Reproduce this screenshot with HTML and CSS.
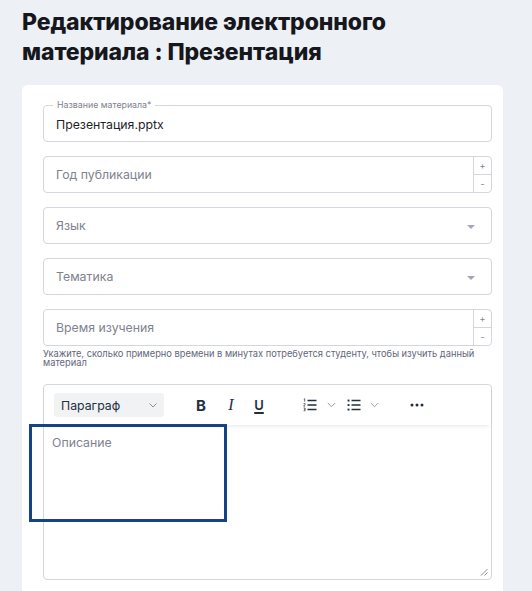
FILE: index.html
```html
<!DOCTYPE html>
<html lang="ru">
<head>
<meta charset="utf-8">
<link rel="stylesheet" href="styles.css">
</head>
<body>
<h1 class="title">Редактирование электронного материала : Презентация</h1>
<div class="card">
  <div class="field outlined">
    <span class="legend">Название материала*</span>
    <span class="value">Презентация.pptx</span>
  </div>
  <div class="field number">
    <span class="placeholder">Год публикации</span>
    <div class="spin"><span>+</span><span>-</span></div>
  </div>
  <div class="field select">
    <span class="placeholder">Язык</span>
    <span class="caret"></span>
  </div>
  <div class="field select">
    <span class="placeholder">Тематика</span>
    <span class="caret"></span>
  </div>
  <div class="group">
    <div class="field number">
      <span class="placeholder">Время изучения</span>
      <div class="spin"><span>+</span><span>-</span></div>
    </div>
    <p class="hint">Укажите, сколько примерно времени в минутах потребуется студенту, чтобы изучить данный материал</p>
  </div>
  <div class="editor">
    <div class="toolbar">
      <div class="block-select">
        <span>Параграф</span>
        <svg width="8" height="5" viewBox="0 0 8 5"><path d="M0.5 0.5l3.5 3.5 3.5-3.5" fill="none" stroke="#7d818c" stroke-width="0.9"/></svg>
      </div>
      <span class="tb bold">B</span>
      <span class="tb italic">I</span>
      <span class="tb under">U</span>
      <span class="tb ol">
        <svg width="14" height="14" viewBox="0 0 14 14"><path d="M4.5 2.5h9M4.5 7h9M4.5 11.5h9" stroke="#222f3e" stroke-width="1.5"/><path d="M0.8 1.2l.9-.5v3M0.6 5.6h1.5v.9L.6 8.1h1.6M0.6 10h1.5v1.3H1.1M2.1 11.3v1.5H0.6" fill="none" stroke="#222f3e" stroke-width=".7"/></svg>
      </span>
      <svg class="chev c1" width="9" height="6" viewBox="0 0 9 6"><path d="M0.8 1l3.7 3.7L8.2 1" fill="none" stroke="#8a8f99" stroke-width="0.9"/></svg>
      <span class="tb ul">
        <svg width="14" height="14" viewBox="0 0 14 14"><path d="M4.5 2.5h9M4.5 7h9M4.5 11.5h9" stroke="#222f3e" stroke-width="1.5"/><rect x="0.6" y="1.6" width="1.9" height="1.9" fill="#222f3e"/><rect x="0.6" y="6.1" width="1.9" height="1.9" fill="#222f3e"/><rect x="0.6" y="10.6" width="1.9" height="1.9" fill="#222f3e"/></svg>
      </span>
      <svg class="chev c2" width="9" height="6" viewBox="0 0 9 6"><path d="M0.8 1l3.7 3.7L8.2 1" fill="none" stroke="#8a8f99" stroke-width="0.9"/></svg>
      <span class="tb more">
        <svg width="14" height="4" viewBox="0 0 14 4"><circle cx="2" cy="2" r="1.5" fill="#222f3e"/><circle cx="7" cy="2" r="1.5" fill="#222f3e"/><circle cx="12" cy="2" r="1.5" fill="#222f3e"/></svg>
      </span>
    </div>
    <div class="content">
      <span class="placeholder">Описание</span>
      <div class="focus-box"></div>
      <svg class="resize" width="8" height="8" viewBox="0 0 8 8"><path d="M7.5 1L1 7.5M7.5 4.5L4.5 7.5" stroke="#7d818c" stroke-width="0.9"/></svg>
    </div>
  </div>
</div>
</body>
</html>
```

FILE: styles.css
```css
* { box-sizing: border-box; }
html, body { margin: 0; padding: 0; }
body {
  background: #edf1f5;
  font-family: Inter, "Noto Sans", sans-serif;
  color: #1e1f26;
  width: 532px;
  height: 591px;
  overflow: hidden;
}
.title {
  margin: 0;
  padding: 7px 0 0 22px;
  width: 440px;
  font-size: 23px;
  line-height: 30px;
  font-weight: 800;
  letter-spacing: -0.1px;
  color: #16171d;
}
.card {
  margin: 18px 29px 0 22px;
  background: #fff;
  border-radius: 6px;
  padding: 20px 11px 20px 21px;
  display: flex;
  flex-direction: column;
  gap: 14px;
}
.field {
  position: relative;
  height: 37px;
  border: 1px solid #d3d6dc;
  border-radius: 4px;
  display: flex;
  align-items: center;
  padding-left: 12px;
  font-size: 12.3px;
}
.placeholder { color: #80828f; }
.value { color: #1e1f26; }
.legend {
  position: absolute;
  top: -6px;
  left: 9px;
  padding: 0 4px;
  background: #fff;
  font-size: 8.8px;
  line-height: 10px;
  color: #80828f;
}
.field.outlined { padding-top: 1px; }
.spin {
  margin-left: auto;
  width: 18px;
  align-self: stretch;
  border-left: 1px solid #d3d6dc;
  display: flex;
  flex-direction: column;
}
.spin span {
  flex: 1;
  display: flex;
  align-items: center;
  justify-content: center;
  font-size: 9px;
  color: #80828f;
}
.spin span + span { border-top: 1px solid #d3d6dc; }
.caret {
  margin-left: auto;
  margin-right: 16px;
  width: 0;
  height: 0;
  border-left: 4px solid transparent;
  border-right: 4px solid transparent;
  border-top: 4px solid #a3a6b7;
  margin-top: 2px;
}
.group { display: flex; flex-direction: column; gap: 3px; }
.hint {
  margin: 0;
  font-size: 9.3px;
  line-height: 9px;
  color: #62667a;
}
.editor {
  margin-top: 3px;
  height: 196px;
  border: 1px solid #d3d6dc;
  border-radius: 4px;
  display: flex;
  flex-direction: column;
}
.toolbar {
  height: 40px;
  flex: none;
  display: flex;
  align-items: center;
  padding-left: 10px;
  box-shadow: 0 3px 4px -2px rgba(34, 47, 62, 0.12);
  position: relative;
  z-index: 1;
}
.block-select {
  width: 110px;
  height: 24px;
  background: #f1f2f4;
  border-radius: 3px;
  display: flex;
  align-items: center;
  justify-content: space-between;
  padding: 0 7px 0 7px;
  font-size: 12.3px;
  color: #222f3e;
}
.tb {
  display: flex;
  align-items: center;
  justify-content: center;
  color: #222f3e;
}
.bold { font-weight: 700; margin-left: 32px; width: 10px; font-size: 15px; }
.italic { font-family: "Liberation Serif", serif; font-style: italic; margin-left: 21px; width: 8px; font-size: 16px; }
.under { margin-left: 19px; width: 10px; text-decoration: underline; text-decoration-thickness: 1.5px; text-underline-offset: 2px; font-size: 13px; font-weight: 600; }
.ol { margin-left: 39px; width: 14px; }
.c1 { margin-left: 10px; }
.ul { margin-left: 11px; width: 14px; }
.c2 { margin-left: 9px; }
.more { margin-left: 31px; width: 14px; }
.content {
  flex: 1;
  position: relative;
  padding: 10px 0 0 8px;
  font-size: 12.3px;
}
.focus-box {
  position: absolute;
  left: -15px;
  top: -1px;
  width: 198px;
  height: 98px;
  border: 3px solid #164384;
}
.resize {
  position: absolute;
  right: 3px;
  bottom: 3px;
}
```
